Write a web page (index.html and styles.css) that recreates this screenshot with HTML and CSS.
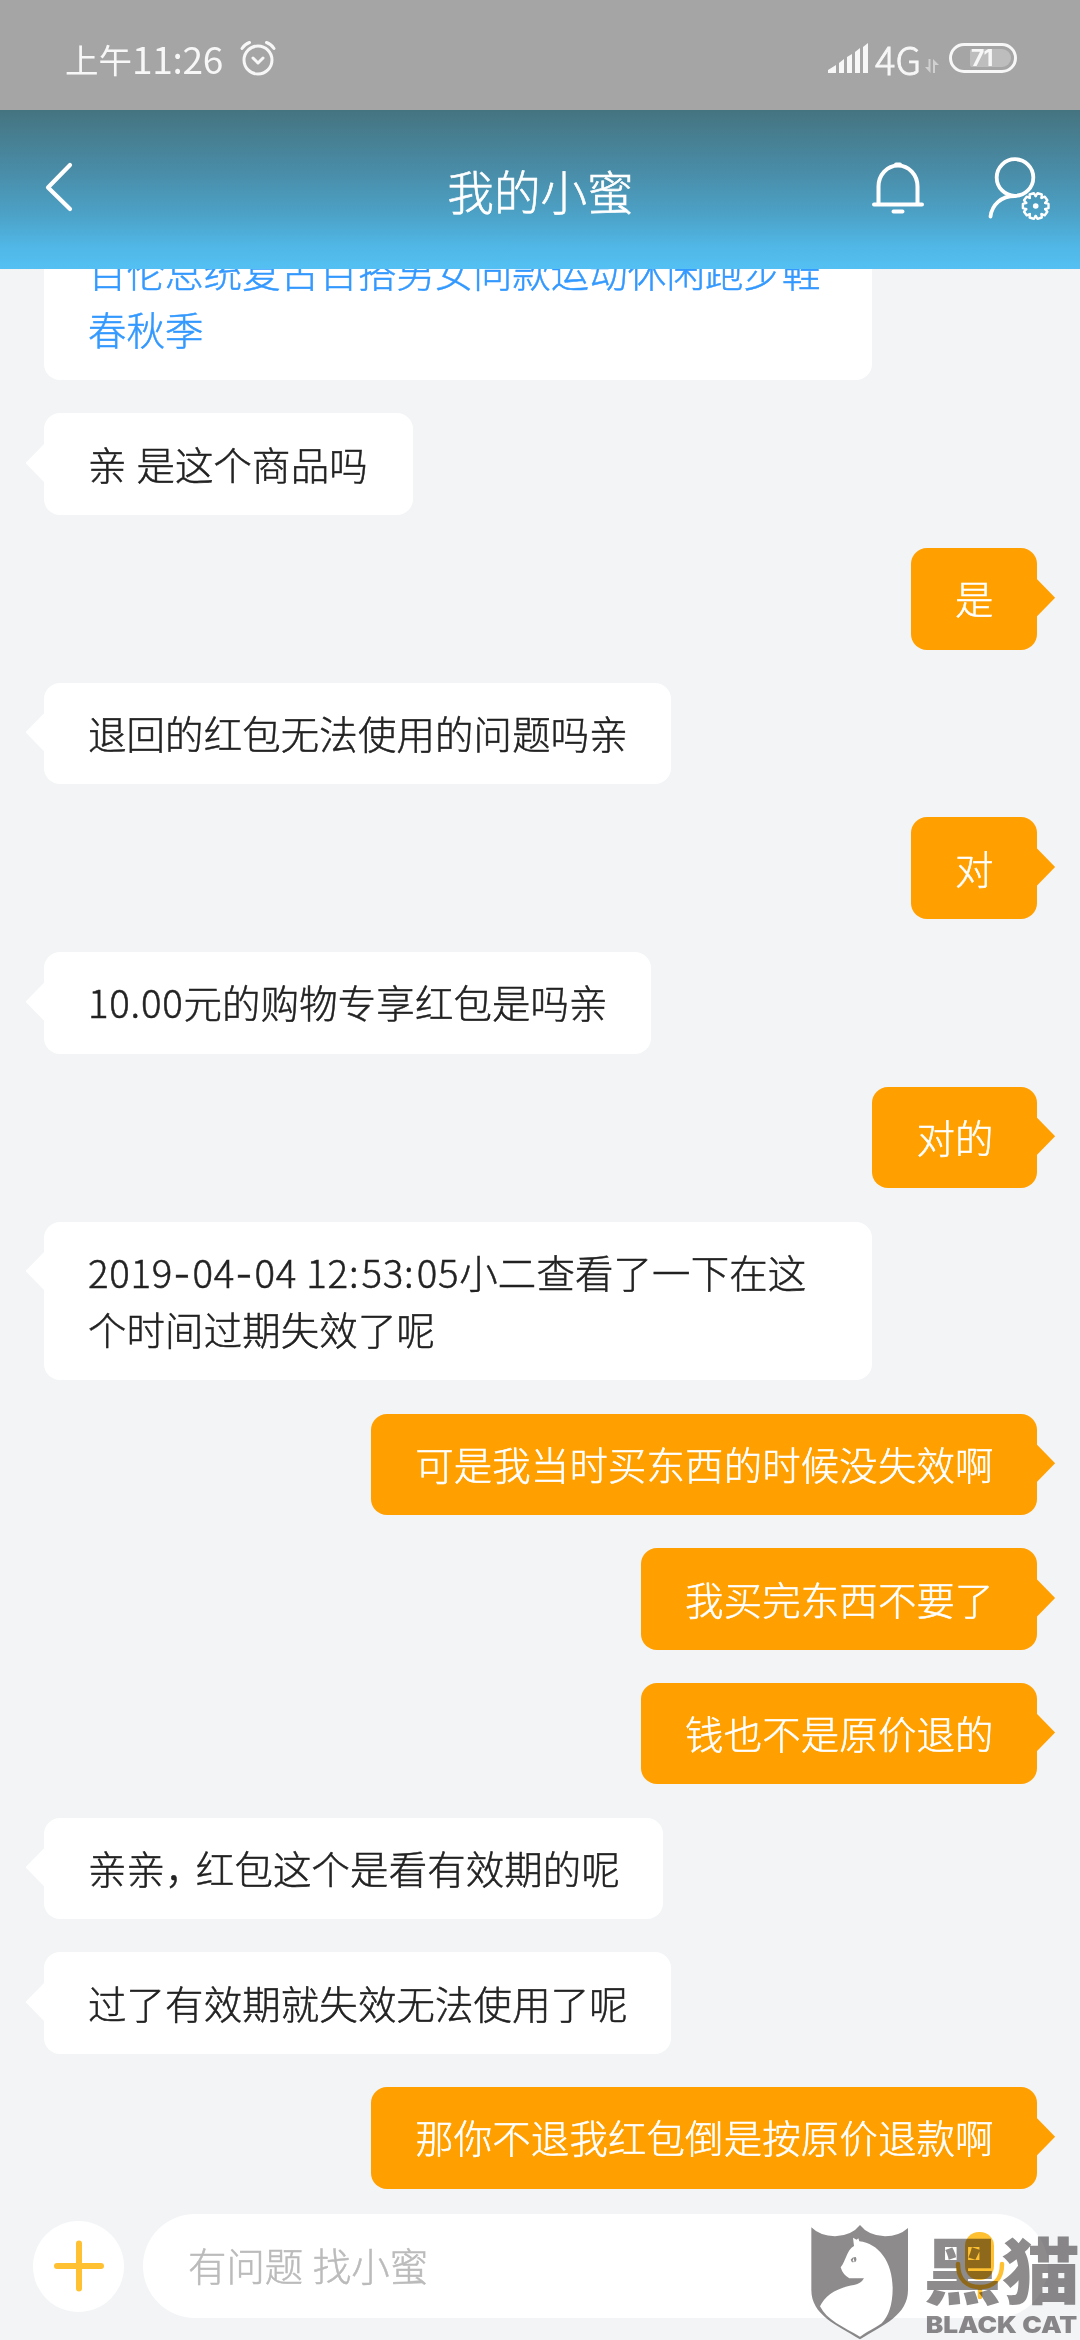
FILE: index.html
```html
<!DOCTYPE html>
<html lang="zh-CN">
<head>
<meta charset="utf-8">
<title>我的小蜜</title>
<link rel="stylesheet" href="styles.css">
</head>
<body>
<div class="screen">
  <div class="status">
    <div class="status-left">
      <span class="ampm">上午</span><span class="clock">11:26</span>
      <svg class="alarm" width="36" height="36" viewBox="0 0 36 36" fill="none" stroke="#f7f7f7" stroke-width="3" stroke-linecap="round" stroke-linejoin="round"><circle cx="18" cy="20" r="14"/><path d="M13 18l5 5 5-5M2 8.500Q5 4 9.500 2.500M34 8.500Q31 4 26.500 2.500"/></svg>
    </div>
    <div class="status-right">
      <svg class="signal" width="40" height="30" viewBox="0 0 40 30" fill="#f7f7f7"><path d="M0 30v-3l8-5v8zM11 30V20l5-4v14zM19 30V14l5-3v19zM27 30V9l5-4v25zM35 30V4l5-4v30z"/></svg>
      <span class="net">4G</span>
      <svg class="data" width="14" height="14" viewBox="0 0 14 14" fill="#d0d0d0"><path d="M3.500 0H5.500V14L0 8H3.500zM8 14h2V6h4L8 0z"/></svg>
      <div class="battery"><span class="level">71</span></div>
    </div>
  </div>

  <div class="header">
    <svg class="back" width="30" height="54" viewBox="0 0 30 54" fill="none" stroke="#fff" stroke-width="4.200" stroke-linecap="round" stroke-linejoin="round"><path d="M26 5L4 27.500 26 49"/></svg>
    <h1 class="title">我的小蜜</h1>
    <div class="actions">
      <svg width="54" height="54" viewBox="0 0 54 54" fill="none" stroke="#fff" stroke-width="4" stroke-linecap="round"><path d="M7.500 42V24.500a19.500 21 0 0 1 39 0V42M3 42.500H51M22.500 49.500H31.500"/><path d="M25 2.500h4"/></svg>
      <svg width="64" height="64" viewBox="0 0 64 64" fill="none" stroke="#fff" stroke-width="3.800" stroke-linecap="round">
        <defs><path id="tooth" d="M-3.100 -9.500L-2.200 -12.800H2.200L3.100 -9.500"/></defs>
        <circle cx="28" cy="20.500" r="18.300"/><path d="M3.500 59.500C5 48 14 39 28 39"/>
        <g transform="translate(48.700 49)" stroke-width="2.400" stroke-linejoin="round">
          <use href="#tooth" transform="rotate(18)"/><use href="#tooth" transform="rotate(54)"/><use href="#tooth" transform="rotate(90)"/><use href="#tooth" transform="rotate(126)"/><use href="#tooth" transform="rotate(162)"/><use href="#tooth" transform="rotate(198)"/><use href="#tooth" transform="rotate(234)"/><use href="#tooth" transform="rotate(270)"/><use href="#tooth" transform="rotate(306)"/><use href="#tooth" transform="rotate(342)"/>
          <circle r="2.800" fill="#fff" stroke="none"/>
        </g>
      </svg>
    </div>
  </div>

  <div class="chat">
    <div class="msg in link">百伦总统复古百搭男女同款运动休闲跑步鞋春秋季</div>
    <div class="msg in"><span class="gap">亲 是这个商品吗</span></div>
    <div class="msg out">是</div>
    <div class="msg in">退回的红包无法使用的问题吗亲</div>
    <div class="msg out">对</div>
    <div class="msg in"><span class="num">10.00</span>元的购物专享红包是吗亲</div>
    <div class="msg out">对的</div>
    <div class="msg in"><span class="num">2019<span class="dash">-</span>04<span class="dash">-</span>04 12<span class="colon">:</span>53<span class="colon">:</span>05</span>小二查看了一下在这个时间过期失效了呢</div>
    <div class="msg out">可是我当时买东西的时候没失效啊</div>
    <div class="msg out">我买完东西不要了</div>
    <div class="msg out">钱也不是原价退的</div>
    <div class="msg in">亲亲<span class="comma">，</span>红包这个是看有效期的呢</div>
    <div class="msg in">过了有效期就失效无法使用了呢</div>
    <div class="msg out">那你不退我红包倒是按原价退款啊</div>
  </div>

  <div class="composer">
    <div class="plus"><svg width="52" height="52" viewBox="0 0 52 52" stroke="#ffc132" stroke-width="6" stroke-linecap="round"><path d="M4 26H48M26 3.500V48.500"/></svg></div>
    <div class="field">
      <span class="hint">有问题 找小蜜</span>
      <svg width="50" height="68" viewBox="0 0 50 68" fill="none" stroke="#ffc132" stroke-width="4.500" stroke-linecap="round"><rect x="10" y="0" width="29" height="48" rx="14" fill="#ffc132" stroke="none"/><path d="M3 32C3 48 12 55 25 55S47 48 47 32M25 55V65"/></svg>
    </div>
  </div>

  <svg class="watermark" width="300" height="150" viewBox="0 0 900 450">
    <path fill="#fff" d="M226 143L238 158C295 165 340 220 340 300C340 350 325 385 305 402L240 444 150 390 118 352C135 315 175 295 228 286Q244 280 252 266L210 264Q190 250 182 236C190 215 198 185 222 168Z"/>
  </svg>
  <svg class="watermark ink" width="300" height="150" viewBox="0 0 900 450">
    <path fill-rule="evenodd" d="M94 112Q120 138 165 139Q215 137 240 105Q265 137 315 139Q358 138 384 114V300C384 375 310 405 240 448C170 405 94 375 94 300ZM219 143L222 168C200 180 198 212 182 232Q188 254 208 265H252Q244 280 222 285C165 295 135 318 120 349C140 390 190 411 240 440C270 420 295 408 305 400C325 380 338 345 338 295C338 215 295 160 238 154L235 145 230 149Z"/>
    <path d="M212 209Q217 200 227 201Q232 209 226 216L216 217ZM220 203L218 214 224 215Z" fill-rule="evenodd"/>
    <text class="brand" transform="translate(430 323) scale(1 .94)" textLength="470" lengthAdjust="spacingAndGlyphs">黑猫</text>
    <text class="brand-en" x="437" y="428" textLength="455" lengthAdjust="spacingAndGlyphs">BLACK CAT</text>
  </svg>
</div>
</body>
</html>
```
FILE: styles.css
```css
* { box-sizing: border-box; }
body {
  margin: 0;
  font-family: "Noto Sans CJK SC", sans-serif;
  font-weight: 300;
}
.screen {
  position: relative;
  width: 1080px;
  height: 2340px;
  overflow: hidden;
  background: #f2f4f6;
  display: flex;
  flex-direction: column;
}
svg { display: block; flex: none; }

/* status bar */
.status {
  height: 110px;
  flex: none;
  background: #a5a5a5;
  color: #f7f7f7;
  display: flex;
  justify-content: space-between;
  padding: 6px 63px 0 65px;
}
.status-left, .status-right { display: flex; align-items: center; }
.ampm { font-size: 33.500px; font-weight: 400; }
.clock { font-size: 37px; font-weight: 400; letter-spacing: -.3px; }
.alarm { margin: 0 0 0 17px; }
.signal { margin-right: 7px; }
.net { font-size: 38px; -webkit-text-stroke: .8px; }
.data { margin: 16px 10px 0 4px; }
.battery {
  width: 68px;
  height: 30px;
  border: 3px solid #f7f7f7;
  border-radius: 15px;
  padding: 3px 3px 3px 18px;
}
.level {
  display: block;
  width: 41px;
  height: 18px;
  padding-left: 1px;
  border-radius: 2px 9px 9px 2px;
  background: #bdbdbd;
  font: bold 23px/19px Inter, sans-serif;
  letter-spacing: -1px;
}

/* title bar */
.header {
  height: 159px;
  flex: none;
  background: linear-gradient(#457480, #498ca7 38%, #4ca2c7 66%, #50b7e6 86%, #54c0f3);
  color: #fff;
  display: grid;
  grid-template-columns: 1fr auto 1fr;
  align-items: center;
  padding: 0 29px 0 44px;
}
.back { margin-top: -5px; }
.title { margin: -1px 0 0 -14px; font-size: 46.600px; font-weight: 300; -webkit-text-stroke: .6px; }
.actions { display: flex; justify-content: flex-end; align-items: center; gap: 62px; margin-top: -2px; }

/* conversation */
.chat {
  height: 1919.500px;
  flex: none;
  overflow: hidden;
  display: flex;
  flex-direction: column;
  justify-content: flex-end;
  align-items: flex-start;
  gap: 33.300px;
  padding: 0 43.400px 0 44px;
}
.msg {
  position: relative;
  flex: none;
  max-width: 828px;
  padding: 21.200px 43px 22.600px 44px;
  border-radius: 16px;
  font-size: 38.400px;
  line-height: 57.600px;
  letter-spacing: .17px;
  -webkit-text-stroke: .5px;
}
.in { background: #fff; color: #222; }
.out { background: #ffa000; color: #fff; align-self: flex-end; }
.link { color: #39f; }
.msg:not(.link)::after {
  content: "";
  position: absolute;
  top: 30px;
  width: 19px;
  height: 39px;
  background: inherit;
}
.in::after { left: -18.500px; clip-path: polygon(100% 0, 0 50%, 100% 100%); }
.out::after { right: -18.500px; clip-path: polygon(0 0, 100% 50%, 0 100%); }
.gap { padding-right: 2px; word-spacing: 1.200px; }
.num { letter-spacing: .75px; }
.dash { font-family: Inter, sans-serif; line-height: 1; letter-spacing: 2px; }
.colon { letter-spacing: 3px; }
.comma { letter-spacing: -7.700px; }

/* message input */
.composer {
  flex: 1;
  display: flex;
  align-items: center;
  gap: 19px;
  padding: 4px 32px 0 33px;
}
.plus {
  width: 91px;
  height: 91px;
  border-radius: 50%;
  background: #fff;
  display: grid;
  place-items: center;
}
.field {
  flex: 1;
  height: 104px;
  border-radius: 52px;
  background: #fff;
  color: #bbb;
  font-size: 38.400px;
  display: flex;
  align-items: center;
  justify-content: space-between;
  padding: 0 43px 0 45px;
}
.hint { padding-bottom: 4px; word-spacing: 1.200px; -webkit-text-stroke: .5px; }

/* complaint-site badge stamped over the corner */
.watermark { position: absolute; left: 780px; top: 2190px; }
.ink { fill: #8e8b8c; mix-blend-mode: multiply; }
.brand { font-size: 228px; font-weight: 900; }
.brand-en { font: 900 68px Inter, sans-serif; }
```
